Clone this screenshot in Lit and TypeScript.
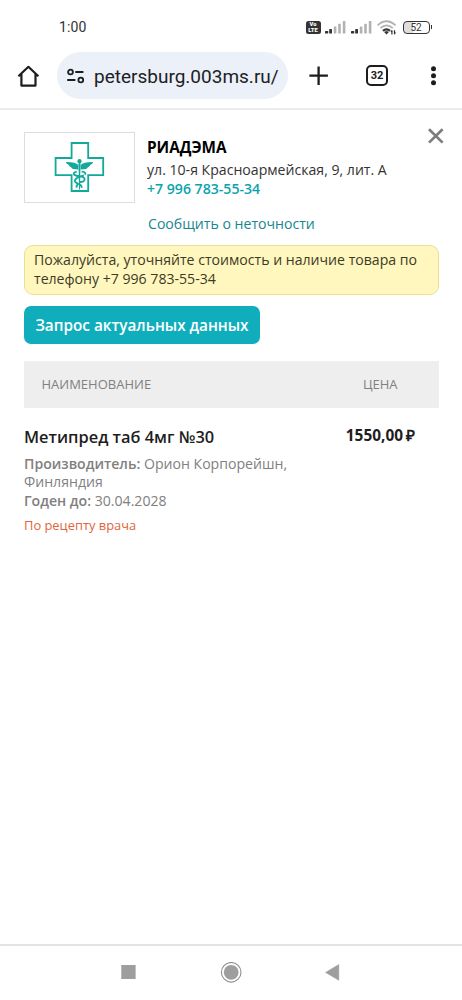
import { LitElement, html, css, svg } from "lit";
import { customElement } from "lit/decorators.js";

const signal = () => svg`
  <svg width="21" height="14" viewBox="0 0 21 14">
    <rect x="0" y="11" width="3.2" height="2.6" rx=".6" fill="#333"/>
    <rect x="4.2" y="9" width="2.8" height="4.6" rx=".6" fill="#333"/>
    <rect x="8.8" y="6.4" width="2.6" height="7.2" rx=".6" fill="#b2b2b2"/>
    <rect x="13.2" y="3.8" width="2.6" height="9.8" rx=".6" fill="#b2b2b2"/>
    <rect x="17.8" y="1" width="2.6" height="12.6" rx=".6" fill="#b2b2b2"/>
  </svg>`;

@customElement("status-bar")
class StatusBar extends LitElement {
  static styles = css`
    :host { display: flex; height: 50px; padding: 4px 30px 0 59px; box-sizing: border-box; align-items: center;
      font-family: Roboto, sans-serif; color: #333; }
    .time { flex: 1; font-size: 14px; letter-spacing: .15px; }
    .icons { display: flex; align-items: center; }
    svg { display: block; }
    .volte { width: 15px; height: 13px; border-radius: 2.5px; background: #333; color: #fff; font-weight: 900;
      font-size: 5.8px; line-height: 6px; padding-top: .5px; box-sizing: border-box; margin-right: 4px; text-align: center; }
    .s2 { margin-left: 5px; }
    .wifi { margin-left: 5px; }
    .battery { margin-left: 6px; display: flex; align-items: center; }
    .cell { width: 27px; height: 13px; box-sizing: border-box; border: 1.5px solid #333; border-radius: 4px;
      background: linear-gradient(90deg, #dedede 35%, #fff 35%); font-size: 10px; line-height: 11px; text-align: center; }
    .tip { width: 1.5px; height: 4px; background: #333; margin-left: 1px; }
  `;
  render() {
    return html`
      <div class="time">1:00</div>
      <div class="icons">
        <div class="volte">Vo<br>LTE</div>
        ${signal()}
        <div class="s2">${signal()}</div>
        <svg class="wifi" width="20" height="15" viewBox="0 0 20 15" fill="none" stroke-linecap="butt">
          <path d="M.6 5.3Q9.5-2.8 18.6 5.3" stroke="#b2b2b2" stroke-width="1.8"/>
          <path d="M3.5 8.2Q9.5 2.6 15.7 8.2" stroke="#b2b2b2" stroke-width="1.8"/>
          <path d="M5.2 10Q9.5 6.6 13.8 10L9.5 14.6Z" fill="#333"/>
          <path d="M7 11.6Q9.5 9.8 12 11.6" stroke="#fff" stroke-width=".7"/>
          <path d="M14.9 14.5V10.5M17.5 10.2V14.3" stroke="#333" stroke-width="1.2"/>
          <path d="M13.3 12L14.9 10L15.4 12M19.2 12.6L17.5 14.6L17 12.6" fill="#333"/>
        </svg>
        <div class="battery"><div class="cell">52</div><div class="tip"></div></div>
      </div>`;
  }
}

@customElement("browser-bar")
class BrowserBar extends LitElement {
  static styles = css`
    :host { display: flex; height: 60px; box-sizing: border-box; border-bottom: 2px solid #ebebeb; padding: 2px 0 0 17px; }
    svg { display: block; flex: none; }
    .home { margin: 13px 17px 0 0; }
    .url { display: flex; align-items: center; width: 231px; height: 47px; box-sizing: border-box; border-radius: 24px;
      background: #ebf0f9; padding-left: 9px; font: 19px Roboto, sans-serif; color: #202124; white-space: nowrap; }
    .url span { margin-left: 9px; padding-top: 1px; }
    .plus { margin: 14px 0 0 21px; }
    .tabs { box-sizing: border-box; width: 22px; height: 21px; border: 2px solid #1d1d1d; border-radius: 5px; margin: 13px 0 0 37px;
      font: bold 11px/17.5px Roboto, sans-serif; color: #1d1d1d; text-align: center; }
    .more { margin: 13px 0 0 42px; }
  `;
  render() {
    return html`
      <svg class="home" width="23" height="22" viewBox="0 0 23 22" fill="none" stroke="#1d1d1d" stroke-width="2.2" stroke-linejoin="round">
        <path d="M1.4 11.2L11.4 1.8L21.4 11.2M4.4 8.8V20.6H18.5V8.8"/>
      </svg>
      <div class="url">
        <svg width="19" height="16" viewBox="0 0 19 16" fill="none" stroke="#1d1d1d" stroke-width="1.8">
          <circle cx="4.5" cy="4" r="2.4"/><path d="M9.3 4H17.4M1.2 12H9.4"/><circle cx="14.8" cy="12" r="2.4"/>
        </svg>
        <span>petersburg.003ms.ru/</span>
      </div>
      <svg class="plus" width="20" height="20" viewBox="0 0 20 20" stroke="#1d1d1d" stroke-width="2.3"><path d="M.4 9.7H18.9M9.6.5V19"/></svg>
      <div class="tabs">32</div>
      <svg class="more" width="7" height="22" viewBox="0 0 7 22" fill="#1d1d1d">
        <circle cx="3.5" cy="3.8" r="2.5"/><circle cx="3.5" cy="10.8" r="2.5"/><circle cx="3.5" cy="17.8" r="2.5"/>
      </svg>`;
  }
}

@customElement("pharmacy-page")
class PharmacyPage extends LitElement {
  static styles = css`
    :host { display: block; flex: 1; padding: 22px 23px 0 24px; font: 14.1px/18.7px "Open Sans", sans-serif; color: #333; white-space: nowrap; }
    .head { display: flex; height: 113px; }
    .logo { width: 111px; height: 71px; box-sizing: border-box; border: 1px solid #ddd; }
    .logo svg { display: block; margin: 8px 0 0 29px; }
    .info { flex: 1; margin-left: 12px; padding-top: 5px; }
    .name { font-size: 15.3px; font-weight: 700; color: #000; line-height: 20px; }
    .addr { margin-top: 4px; }
    .phone { color: #0ba4ae; font-weight: 600; }
    .report { color: #16868f; margin: 17px 0 0 1px; }
    .close { align-self: flex-start; margin: -5px -6px 0 0; }
    .note { height: 50px; box-sizing: border-box; border: 1px solid #ebdf97; border-radius: 9px; background: #fff7bd;
      padding: 5px 9px; color: #3d3a28; }
    .btn { display: flex; align-items: center; justify-content: center; margin-top: 11px; width: 236px; height: 38px;
      border-radius: 7px; background: #10aebd; color: #fff; font-weight: 600; font-size: 15.3px; }
    .th { display: flex; justify-content: space-between; align-items: center; margin-top: 17px; height: 47px; background: #eee;
      padding: 0 41.5px 0 17.5px; font-size: 13px; color: #808080; }
    .row { display: flex; justify-content: space-between; padding: 18px 24px 0 0; }
    .title { font-size: 16.4px; line-height: 22px; font-weight: 600; color: #1d1d1d; margin-bottom: 6.5px; }
    .meta { color: #808080; }
    .meta b { font-weight: 600; }
    .rx { color: #e0653a; font-size: 12.9px; margin-top: 5px; }
    .price { font-size: 15.4px; line-height: 20px; font-weight: 700; color: #1d1d1d; }
    .rub { margin-left: 3px; }
  `;
  render() {
    return html`
      <div class="head">
        <div class="logo">
          <svg width="52" height="54" viewBox="0 0 52 54" fill="none" stroke="#12a89a" stroke-width="1.8">
            <path d="M18.2 2.2H34.8V17.2H49.8V34.4H34.8V50.2H18.2V34.4H2.2V17.2H18.2Z" transform="translate(-.6 -.2)"/>
            <g transform="translate(-.8 -.6)">
            <g fill="#12a89a" stroke="none">
              <circle cx="26.3" cy="20.8" r="2.1"/>
              <path d="M25.3 21H27.3L26.8 49H25.8Z"/>
              <path d="M25.2 24.6Q22 21.4 12.7 21.6Q13.4 24 15.5 24.4Q15.6 26.4 18 26.8Q18.2 29 25.2 29Z"/>
              <path d="M27.4 24.6Q30.6 21.4 39.9 21.6Q39.2 24 37.1 24.4Q37 26.4 34.6 26.8Q34.4 29 27.4 29Z"/>
            </g>
            <path d="M23.5 31.2Q19.4 32.2 21 34.4Q22.5 35.6 27 36Q32.5 37 31.2 40Q30.3 42 26.5 41.5M28.4 31.2Q33.4 31.6 31.8 34.4M30.6 35Q22 37.5 21.6 40.2Q21.6 42 25 43.5Q28.8 44.6 28.4 47.4M24.5 44.2Q22.8 45.4 23.6 47.2"/>
            </g>
          </svg>
        </div>
        <div class="info">
          <div class="name">РИАДЭМА</div>
          <div class="addr">ул. 10-я Красноармейская, 9, лит. А</div>
          <div class="phone">+7 996 783-55-34</div>
          <div class="report">Сообщить о неточности</div>
        </div>
        <svg class="close" width="18" height="18" viewBox="0 0 18 18" stroke="#7d7d7d" stroke-width="2.7"><path d="M2 2.2L15.6 15.6M15.6 2.2L2 15.6"/></svg>
      </div>
      <div class="note">Пожалуйста, уточняйте стоимость и наличие товара по<br>телефону +7 996 783-55-34</div>
      <div class="btn">Запрос актуальных данных</div>
      <div class="th"><span>НАИМЕНОВАНИЕ</span><span>ЦЕНА</span></div>
      <div class="row">
        <div>
          <div class="title">Метипред таб 4мг №30</div>
          <div class="meta"><b>Производитель:</b> Орион Корпорейшн,<br>Финляндия<br><b>Годен до:</b> 30.04.2028</div>
          <div class="rx">По рецепту врача</div>
        </div>
        <div class="price">1550,00<span class="rub">₽</span></div>
      </div>`;
  }
}

@customElement("app-root")
class AppRoot extends LitElement {
  static styles = css`
    :host { display: flex; flex-direction: column; width: 462px; height: 1000px; background: #fff; overflow: hidden; }
    .nav { display: flex; height: 56px; box-sizing: border-box; border-top: 2px solid #e3e3e3; padding: 16px 0 0 121px; }
    .nav svg { display: block; }
  `;
  render() {
    return html`
      <status-bar></status-bar>
      <browser-bar></browser-bar>
      <pharmacy-page></pharmacy-page>
      <div class="nav">
        <svg width="220" height="22" viewBox="0 0 220 22" fill="#9e9e9e">
          <rect x=".3" y="3" width="14.3" height="14"/>
          <circle cx="110.2" cy="10.3" r="7.4"/>
          <circle cx="110.2" cy="10.3" r="9.8" fill="none" stroke="#8e8e8e" stroke-width="1.1"/>
          <path d="M204.6 10.4L217.8 2.6V18.2Z" stroke="#9e9e9e" stroke-width=".6"/>
        </svg>
      </div>`;
  }
}
